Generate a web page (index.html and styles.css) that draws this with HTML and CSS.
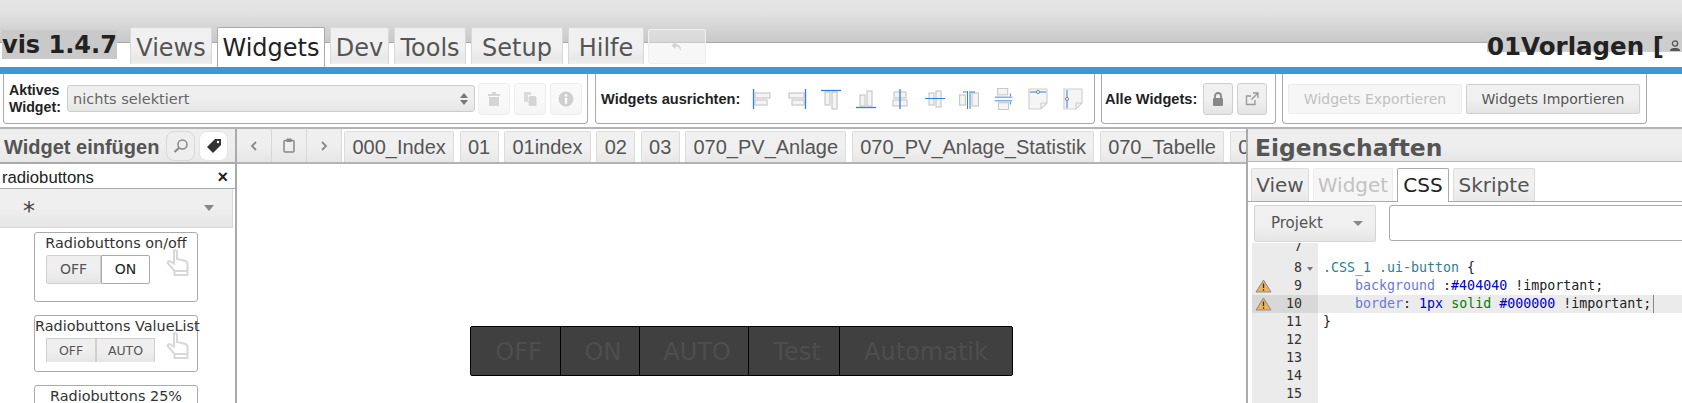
FILE: index.html
```html
<!DOCTYPE html>
<html lang="de">
<head>
<meta charset="utf-8">
<title>vis</title>
<link rel="stylesheet" href="styles.css">
</head>
<body>
<svg class="defs" width="0" height="0">
  <symbol id="hand" viewBox="0 0 24 27"><path d="M8 1.500c1.500-.8 3 0 3 1.600V10l7 1.500c2 .4 3.500 1.500 3.500 3.500v7h-13L2 14.500c-1-1.500.8-3 2.200-2L8 14.500V3.500z M8.500 22v4h13v-4" fill="#fff" stroke="#d8d8d8" stroke-width="2"/></symbol>
  <symbol id="warn" viewBox="0 0 17 14"><path d="M8.500 1 16 13H1z" fill="#f0b35a" stroke="#8a8a8a"/><path d="M8.500 4.500v4.500M8.500 10.200v1.500" stroke="#333" stroke-width="1.300"/></symbol>
</svg>

<header class="top">
  <div class="brand">vis 1.4.7</div>
  <nav class="menu">
    <span class="mtab t-views">Views</span>
    <span class="mtab mtab-on t-widgets">Widgets</span>
    <span class="mtab t-dev">Dev</span>
    <span class="mtab t-tools">Tools</span>
    <span class="mtab t-setup">Setup</span>
    <span class="mtab t-hilfe">Hilfe</span>
    <span class="undo"><svg width="14" height="12" viewBox="0 0 14 12"><path d="M5.500 1 1.500 4.500 5.500 8V5.500c3 0 4.500 1 5 5 .8-4-.5-7-5-7.500z" fill="#d2d2d2"/></svg></span>
  </nav>
  <div class="project"><span class="pname">01Vorlagen [</span><svg class="user" width="14" height="12" viewBox="0 0 14 12"><circle cx="7" cy="3.500" r="2.600" fill="none" stroke="#555" stroke-width="1.300"/><path d="M2 11c0-3 3-3 5-3s5 0 5 3z" fill="#555"/></svg></div>
</header>
<div class="blue"></div>

<section class="toolbar">
  <div class="group g1">
    <label class="lab lab-two">Aktives<br>Widget:</label>
    <div class="sel"><span>nichts selektiert</span><svg width="8" height="12" viewBox="0 0 8 12"><path d="M4 0 8 5H0zM4 12 0 7h8z" fill="#777"/></svg></div>
    <span class="ibtn off"><svg width="14" height="16" viewBox="0 0 14 16"><path d="M1 3h12v2H1zM5 1h4v2H5zM2 6h10v9H2z" fill="#888"/></svg></span>
    <span class="ibtn off"><svg width="14" height="16" viewBox="0 0 14 16"><path d="M1 1h7v3H5v7H1z" fill="#999"/><rect x="5.500" y="5" width="8" height="10" rx="1.500" fill="#888"/></svg></span>
    <span class="ibtn off"><svg width="16" height="16" viewBox="0 0 16 16"><circle cx="8" cy="8" r="7.500" fill="#777"/><path d="M6.800 3.200h2.400v2.200H6.800zM6.800 6.800h2.400v6H6.800z" fill="#fff"/></svg></span>
  </div>
  <div class="group g2">
    <label class="lab">Widgets ausrichten:</label>
    <div class="aligns">
      <svg class="al" viewBox="0 0 20 20"><g class="gb"><rect x="3" y="4" width="15" height="5"/><rect x="3" y="11" width="12" height="5"/></g><path class="bl" d="M1.500 0v20"/></svg>
      <svg class="al" viewBox="0 0 20 20"><g class="gb"><rect x="2" y="4" width="15" height="5"/><rect x="5" y="11" width="12" height="5"/></g><path class="bl" d="M18.500 0v20"/></svg>
      <svg class="al" viewBox="0 0 20 20"><g class="gb"><rect x="4" y="3" width="5" height="13"/><rect x="11" y="3" width="5" height="17"/></g><path class="bl" d="M0 1.500h20"/></svg>
      <svg class="al" viewBox="0 0 20 20"><g class="gb"><rect x="4" y="6" width="5" height="11"/><rect x="11" y="2" width="5" height="15"/></g><path class="bl" d="M0 18.500h20"/></svg>
      <svg class="al" viewBox="0 0 20 20"><g class="gb"><rect x="4" y="3" width="12" height="6"/><rect x="3" y="11" width="14" height="6"/></g><path class="bl" d="M10 0v20"/></svg>
      <svg class="al" viewBox="0 0 20 20"><g class="gb"><rect x="4" y="4" width="5" height="12"/><rect x="11" y="2" width="5" height="16"/></g><path class="bl thin" d="M0 9.500h20"/></svg>
      <svg class="al" viewBox="0 0 20 20"><g class="gb"><rect x="0.500" y="6" width="6" height="10"/><rect x="13" y="4" width="6.500" height="13"/></g><path class="bl thin" d="M8.500 2v18M11 2v18M4 3h3.500M16 3h-4"/></svg>
      <svg class="al" viewBox="0 0 20 24"><g class="gb"><rect x="3" y="0.500" width="11" height="7"/><rect x="4" y="16" width="11" height="7.500"/></g><path class="bl thin" d="M0 10h19M0 14h19M17 6v3M17 15v3"/></svg>
      <svg class="al" viewBox="0 0 20 22"><path class="pg" d="M1 1h18v14l-6 6H1zM13 21v-6h6"/><path class="bl thin" d="M2 4h16"/><circle class="ring" cx="10" cy="4" r="1.600"/></svg>
      <svg class="al" viewBox="0 0 20 22"><path class="pg" d="M1 1h18v14l-6 6H1zM13 21v-6h6"/><path class="bl thin" d="M4 2v18"/><circle class="ring" cx="4" cy="11" r="1.600"/></svg>
    </div>
  </div>
  <div class="group g3">
    <label class="lab">Alle Widgets:</label>
    <span class="ibtn lock"><svg width="12" height="14" viewBox="0 0 12 14"><path d="M3 6V4a3 3 0 0 1 6 0v2" fill="none" stroke="#888" stroke-width="1.800"/><rect x="1" y="6" width="10" height="8" rx="1" fill="#888"/></svg></span>
    <span class="ibtn lock"><svg width="14" height="14" viewBox="0 0 14 14"><path d="M10 8v4.500H1.500V4H6M8 1h5v5M13 1 6.500 7.500" fill="none" stroke="#999" stroke-width="1.300"/></svg></span>
  </div>
  <div class="group g4">
    <span class="tbtn tbtn-off">Widgets Exportieren</span>
    <span class="tbtn">Widgets Importieren</span>
  </div>
</section>

<main class="main">
  <aside class="left">
    <div class="lhead">
      <h2 class="ltitle">Widget einfügen</h2>
      <span class="round"><svg width="16" height="16" viewBox="0 0 16 16"><circle cx="9.500" cy="6.500" r="4.500" fill="none" stroke="#888" stroke-width="1.500"/><path d="M6 10 1.500 14" stroke="#888" stroke-width="2.200"/></svg></span>
      <span class="round round-on"><svg width="16" height="16" viewBox="0 0 16 16"><path d="M9 1h6v6l-8 8-6-6z" fill="#333"/><circle cx="12" cy="4" r="1.200" fill="#fff"/></svg></span>
    </div>
    <div class="search"><span>radiobuttons</span><b>×</b></div>
    <div class="accord"><span class="star">*</span><span class="caret"></span></div>
    <div class="items">
      <article class="item i1">
        <div class="ititle">Radiobuttons on/off</div>
        <div class="set"><span class="sb b-off">OFF</span><span class="sb sb-on b-on">ON</span></div>
        <svg class="hand"><use href="#hand"/></svg>
      </article>
      <article class="item i2">
        <div class="ititle">Radiobuttons ValueList</div>
        <div class="set set-small"><span class="sb b-off2">OFF</span><span class="sb b-auto">AUTO</span></div>
        <svg class="hand"><use href="#hand"/></svg>
      </article>
      <article class="item i3">
        <div class="ititle">Radiobuttons 25%</div>
      </article>
    </div>
  </aside>

  <section class="center">
    <div class="viewbar">
      <span class="nav"><svg width="8" height="10" viewBox="0 0 8 10"><path d="M6 1 2 5l4 4" fill="none" stroke="#888" stroke-width="1.800"/></svg></span>
      <span class="nav"><svg width="12" height="15" viewBox="0 0 12 15"><rect x="1" y="2.500" width="10" height="11.500" rx="1" fill="none" stroke="#888" stroke-width="1.500"/><rect x="3.500" y="0.500" width="5" height="3.500" fill="#888"/></svg></span>
      <span class="nav"><svg width="8" height="10" viewBox="0 0 8 10"><path d="M2 1l4 4-4 4" fill="none" stroke="#888" stroke-width="1.800"/></svg></span>
      <span class="vtab">000_Index</span>
      <span class="vtab">01</span>
      <span class="vtab">01index</span>
      <span class="vtab">02</span>
      <span class="vtab">03</span>
      <span class="vtab">070_PV_Anlage</span>
      <span class="vtab">070_PV_Anlage_Statistik</span>
      <span class="vtab">070_Tabelle</span>
      <span class="vtab">0</span>
    </div>
    <div class="canvas">
      <div class="radios">
        <span class="rb r1">OFF</span><span class="rb r2">ON</span><span class="rb r3">AUTO</span><span class="rb r4">Test</span><span class="rb r5">Automatik</span>
      </div>
    </div>
  </section>

  <aside class="right">
    <h2 class="rhead">Eigenschaften</h2>
    <div class="rtabs">
      <span class="rtab w-view">View</span>
      <span class="rtab rtab-off w-widget">Widget</span>
      <span class="rtab rtab-on w-css">CSS</span>
      <span class="rtab w-skripte">Skripte</span>
    </div>
    <div class="cssrow">
      <span class="proj">Projekt<i class="caret"></i></span>
      <span class="cssinput"></span>
    </div>
    <div class="editor">
      <div class="ln first"><span class="gut"><span class="num">7</span></span><code></code></div>
      <div class="ln"><span class="gut"><span class="num">8</span><i class="fold"></i></span><code><span class="cl">.CSS_1 .ui-button</span> {</code></div>
      <div class="ln"><span class="gut"><svg class="warn"><use href="#warn"/></svg><span class="num">9</span></span><code>    <span class="pr">background</span> :<span class="nb">#404040</span> !important;</code></div>
      <div class="ln ln-on"><span class="gut"><svg class="warn"><use href="#warn"/></svg><span class="num">10</span></span><code>    <span class="pr">border</span>: <span class="nb">1px</span> <span class="kw">solid</span> <span class="nb">#000000</span> !important;<i class="cursor"></i></code></div>
      <div class="ln"><span class="gut"><span class="num">11</span></span><code>}</code></div>
      <div class="ln"><span class="gut"><span class="num">12</span></span><code></code></div>
      <div class="ln"><span class="gut"><span class="num">13</span></span><code></code></div>
      <div class="ln"><span class="gut"><span class="num">14</span></span><code></code></div>
      <div class="ln"><span class="gut"><span class="num">15</span></span><code></code></div>
    </div>
  </aside>
</main>
</body>
</html>
```
FILE: styles.css
```css
* { box-sizing: border-box; }
html, body { margin: 0; padding: 0; height: 403px; overflow: hidden; background: #fff; }
body { font-family: "DejaVu Sans", sans-serif; color: #222; width: 1682px; }
.defs { position: absolute; }
h2 { margin: 0; }

/* top */
.top {
  height: 67px; display: flex; align-items: flex-start; overflow: hidden;
  background: linear-gradient(#e5e5e5 0, #e2e2e2 12px, #c8c8c8 42px, #a8a8a8 42px, #a8a8a8 43px, #fff 43px);
}
.brand { margin: 30px 0 0 2px; width: 115px; height: 29px; line-height: 31px; background: #c9c9c9; font-weight: bold; font-size: 24px; color: #222; white-space: nowrap; }
.menu { display: flex; margin: 27px 0 0 13px; }
.mtab {
  height: 37px; line-height: 41px; font-size: 24px; text-align: center; color: #555;
  border: 1px solid #d8d8d8; border-bottom: none; border-radius: 2px 2px 0 0; margin-right: 5px;
  background: linear-gradient(#f0f0f0 55%, #e8e8e8 85%, #eee);
}
.mtab-on { height: 40px; background: #fff; color: #222; border-color: #aaa; }
.t-views { width: 82px; }
.t-widgets { width: 108px; }
.t-dev { width: 59px; }
.t-tools { width: 72px; }
.t-setup { width: 92px; }
.t-hilfe { width: 76px; }
.undo { width: 58px; height: 35px; margin: 2px 0 0 -1px; background: rgba(238,238,238,.45); border: 1px solid #efefef; border-radius: 2px; display: flex; align-items: center; justify-content: center; }
.project { margin: 32px 0 0 auto; width: 195px; display: flex; align-items: flex-start; flex: none; background: linear-gradient(#cdcdcd 20px, transparent 20px); height: 35px; }
.pname { font-weight: bold; font-size: 24.500px; line-height: 30px; white-space: pre; color: #222; }
.user { margin: 8px 0 0 4px; flex: none; }
.blue { height: 7px; background: #3d97d3; }

/* toolbar */
.toolbar { height: 55px; display: flex; border-bottom: 2px solid #b4b4b4; padding: 0 0 0 3px; }
.group { height: 50px; border: 1px solid #aaa; border-top: none; border-radius: 0 0 4px 4px; display: flex; align-items: center; }
.g1 { width: 585px; padding-left: 5px; }
.g2 { width: 500px; margin-left: 7px; padding-left: 5px; }
.g3 { width: 175px; margin-left: 6px; padding-left: 3px; }
.g4 { width: 365px; margin-left: 6px; padding-left: 5px; }
.lab { font-family: "Liberation Sans", sans-serif; font-weight: bold; font-size: 14.6px; color: #222; white-space: nowrap; }
.lab-two { line-height: 17px; font-size: 14.2px; width: 58px; }
.sel { width: 408px; height: 27px; border: 1px solid #ccc; border-radius: 3px; display: flex; align-items: center; justify-content: space-between; padding: 0 6px 0 5px; font-size: 14.500px; color: #666; background: linear-gradient(#efefef 50%, #e6e6e6); margin-right: 3px; }
.ibtn { width: 32px; height: 32px; border: 1px solid #cfcfcf; border-radius: 3px; background: linear-gradient(#f0f0f0 50%, #e4e4e4); display: flex; align-items: center; justify-content: center; margin-right: 4px; flex: none; }
.ibtn.off { opacity: .35; }
.lock { width: 30px; margin-right: 4px; }
.g3 .lab { margin-right: 6px; }
.aligns { display: flex; margin-left: 12px; gap: 14.500px; }
.al { width: 20px; height: 22px; flex: none; }
.gb rect { fill: #f4f4f4; stroke: #c8c8c8; stroke-width: 1.200; }
.bl { stroke: #2f7fe8; stroke-width: 1.300; fill: none; }
.bl.thin { stroke-width: 1; }
.pg { fill: #f5f5f5; stroke: #d0d0d0; stroke-width: 1.200; }
.ring { fill: #eee; stroke: #888; stroke-width: 1; }
.tbtn { width: 174px; height: 30px; line-height: 28px; text-align: center; font-size: 14px; color: #555; border: 1px solid #cfcfcf; border-radius: 2px; background: linear-gradient(#f0f0f0 50%, #e4e4e4); margin-right: 4px; }
.tbtn-off { color: #c0c0c0; background: #f6f6f6; border-color: #ececec; }

/* main */
.main { height: 274px; display: flex; overflow: hidden; }
.left { width: 237px; flex: none; border-right: 2px solid #aaa; height: 274px; overflow: hidden; }
.lhead { height: 35px; display: flex; align-items: center; padding-left: 4px; background: linear-gradient(#eee 55%, #e8e8e8); border-bottom: 2px solid #aaa; }
.ltitle { font-family: "Liberation Sans", sans-serif; font-size: 20px; font-weight: bold; color: #555; width: 162px; white-space: nowrap; padding-top: 3px; }
.round { width: 29px; height: 30px; border: 1px solid #d8d8d8; border-radius: 8px; display: flex; align-items: center; justify-content: center; margin-right: 4px; background: #eee; }
.round-on { background: #fff; border-color: #e5e5e5; }
.search { height: 25px; display: flex; justify-content: space-between; align-items: center; padding: 3px 7px 0 2px; font-family: "Liberation Sans", sans-serif; font-size: 16.700px; color: #222; border-bottom: 1px solid #aaa; }
.search b { font-size: 18px; font-weight: bold; }
.accord { height: 39px; margin-right: 2px; background: linear-gradient(#efefef 50%, #e6e6e6); border-bottom: 1px solid #d8d8d8; border-right: 1px solid #d8d8d8; display: flex; align-items: center; justify-content: space-between; padding: 0 18px 0 23px; }
.star { font-size: 24px; color: #444; line-height: 30px; padding-top: 6px; }
.caret { display: inline-block; width: 0; height: 0; border: 5px solid transparent; border-top: 6px solid #888; border-bottom: none; }
.items { padding: 4px 0 0 34px; }
.item { width: 164px; border: 1px solid #aaa; border-radius: 3px; position: relative; margin-bottom: 13px; }
.i1 { height: 70px; }
.i2 { height: 57px; }
.i3 { height: 40px; }
.ititle { font-size: 14.400px; text-align: center; line-height: 18px; padding-top: 1px; color: #333; white-space: nowrap; }
.set { display: flex; margin: 3px 0 0 11px; }
.sb { height: 29px; line-height: 27px; text-align: center; font-size: 14px; color: #555; border: 1px solid #d0d0d0; background: linear-gradient(#efefef 50%, #e6e6e6); }
.sb-on { background: #fff; color: #222; border-color: #aaa; border-radius: 0 2px 2px 0; }
.b-off { width: 55px; border-radius: 2px 0 0 2px; }
.b-on { width: 49px; }
.set-small { margin-top: 3px; }
.set-small .sb { height: 24px; line-height: 23px; font-size: 12.500px; border-bottom: none; }
.b-off2 { width: 50px; }
.b-auto { width: 59px; }
.hand { position: absolute; left: 131px; top: 16px; width: 24px; height: 27px; }

/* center */
.center { flex: 1; min-width: 0; overflow: hidden; position: relative; }
.viewbar { height: 35px; display: flex; align-items: flex-end; border-bottom: 2px solid #b4b4b4; overflow: hidden; white-space: nowrap; }
.nav { width: 35px; height: 33px; flex: none; display: flex; align-items: center; justify-content: center; background: linear-gradient(#efefef 50%, #e6e6e6); border-right: 1px solid #d8d8d8; }
.nav:nth-child(3) { margin-right: 2px; }
.vtab { flex: none; height: 31px; line-height: 30px; padding: 0 7.400px; font-family: "Liberation Sans", sans-serif; font-size: 20px; color: #555; border: 1px solid #dcdcdc; border-bottom: none; border-radius: 2px 2px 0 0; margin-right: 5.400px; background: linear-gradient(#f0f0f0 55%, #e7e7e7); }
.canvas { position: relative; height: 239px; }
.radios { position: absolute; left: 233px; top: 162px; display: flex; height: 50px; background: #404040; border: 1px solid #000; border-radius: 2px; }
.rb { height: 48px; line-height: 50px; font-size: 24px; color: #4e4e4e; text-align: center; border-right: 1px solid #000; white-space: nowrap; padding-left: 6px; }
.r1 { width: 90px; }
.r2 { width: 79px; }
.r3 { width: 109px; }
.r4 { width: 91px; }
.r5 { width: 172px; border-right: none; padding-left: 0; }

/* right */
.right { width: 436px; flex: none; border-left: 2px solid #aaa; height: 274px; overflow: hidden; }
.rhead { height: 33px; line-height: 39px; font-size: 23.400px; color: #555; padding-left: 7px; background: linear-gradient(#eee 55%, #e6e6e6); border-bottom: 1px solid #b4b4b4; white-space: nowrap; }
.rtabs { display: flex; height: 40px; padding: 6px 0 0 3px; border-bottom: 1px solid #aaa; }
.rtab { height: 33px; line-height: 33px; font-size: 20px; text-align: center; color: #555; border: 1px solid #dcdcdc; border-bottom: none; border-radius: 2px 2px 0 0; margin-right: 4px; background: linear-gradient(#f0f0f0 60%, #e8e8e8); }
.w-view { width: 58px; }
.w-widget { width: 80px; }
.w-css { width: 52px; }
.w-skripte { width: 82px; }
.rtab-off { color: #c2c2c2; background: #f6f6f6; border-color: #ececec; }
.rtab-on { color: #222; background: #fff; border-color: #aaa; height: 34px; }
.cssrow { display: flex; height: 42px; padding: 3px 0 0 6px; }
.proj { width: 122px; flex: none; height: 37px; line-height: 35px; font-size: 15px; color: #555; border: 1px solid #d4d4d4; border-radius: 2px; padding: 0 12px 0 16px; background: linear-gradient(#f0f0f0 55%, #e6e6e6); display: flex; justify-content: space-between; align-items: center; }
.proj .caret { border-width: 5px; }
.cssinput { margin-left: 13px; width: 320px; height: 36px; border: 1px solid #aaa; border-radius: 3px; flex: none; }
.editor { margin-left: 4px; margin-top: -1px; height: 160px; overflow: hidden; font-family: "DejaVu Sans Mono", monospace; font-size: 13.300px; color: #222; }
.ln { height: 18px; line-height: 18px; display: flex; }
.ln.first { height: 16px; line-height: 8px; }
.gut { width: 66px; flex: none; background: #ebebeb; position: relative; color: #333; }
.num { position: absolute; right: 16px; top: 0; }
.ln code { font: inherit; white-space: pre; padding-left: 5px; flex: 1; }
.ln-on .gut { background: #d8d8d8; }
.ln-on code { background: #ebebeb; }
.cursor { display: inline-block; width: 1px; height: 18px; background: #888; vertical-align: top; margin-left: 2px; }
.fold { position: absolute; left: 55px; top: 8px; border: 3px solid transparent; border-top: 4px solid #777; border-bottom: none; }
.warn { position: absolute; left: 3px; top: 2px; width: 17px; height: 14px; }
.cl { color: #2e7e8e; }
.pr { color: #6a78d8; }
.nb { color: #0000cd; }
.kw { color: #008000; }
```
